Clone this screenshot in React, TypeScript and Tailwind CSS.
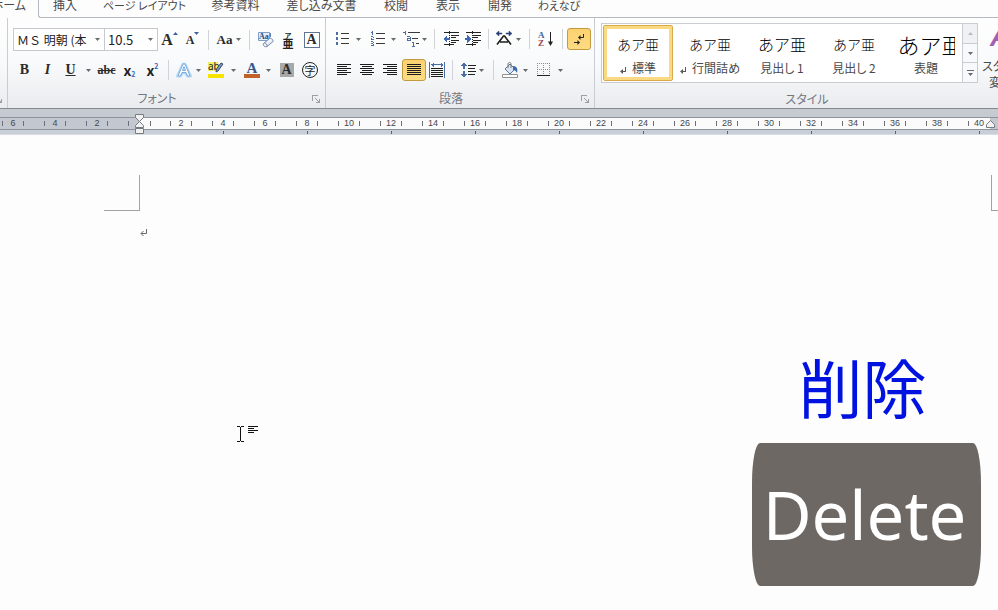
import React from 'react';

interface ButtonProps {
  label: string;
  className?: string;
  children: React.ReactNode;
}

const Tool: React.FC<ButtonProps> = ({ label, className = 'w-[23px] justify-center', children }) => (
  <button type="button" aria-label={label} title={label} className={`flex h-[22px] shrink-0 items-center ${className}`}>
    {children}
  </button>
);

const Caret: React.FC = () => (
  <svg className="shrink-0" width="5" height="3" viewBox="0 0 5 3" fill="#66696e">
    <path d="M0 0h5L2.5 3z" />
  </svg>
);

const Sep: React.FC = () => <div className="mx-1 h-5 w-px shrink-0 bg-[#d0d4d9]" />;

const Launcher: React.FC<{ label: string }> = ({ label }) => (
  <button type="button" aria-label={label} className="absolute right-1 bottom-1 p-px">
    <svg width="8" height="8" viewBox="0 0 8 8" fill="none" stroke="#9ba0a8" shapeRendering="crispEdges">
      <path d="M0.5 6V0.5H6M3 3l4 4M7.5 3.5v4h-4" />
    </svg>
  </button>
);

const Icon: React.FC<{ children: React.ReactNode; smooth?: boolean }> = ({ children, smooth }) => (
  <svg
    className="shrink-0"
    width="16"
    height="16"
    viewBox="0 0 16 16"
    fill="none"
    shapeRendering={smooth ? 'auto' : 'crispEdges'}
  >
    {children}
  </svg>
);

const iconText = "font-['Liberation_Serif',serif] font-bold leading-none text-[#2b2b2b]";

const tabs = [
  { name: '挿入', width: 'w-[52px] text-[12px]' },
  { name: 'ページ レイアウト', width: 'w-[107px] text-[11px]' },
  { name: '参考資料', width: 'w-[75px] text-[12px]' },
  { name: '差し込み文書', width: 'w-[97px] text-[12px]' },
  { name: '校閲', width: 'w-[52px] text-[12px]' },
  { name: '表示', width: 'w-[52px] text-[12px]' },
  { name: '開発', width: 'w-[52px] text-[12px]' },
  { name: 'わえなび', width: 'w-[66px] text-[11px]' },
];

const TabBar: React.FC = () => (
  <nav className="flex h-[18px] overflow-hidden leading-[10px] text-[#4a4a4a]">
    <button type="button" className="flex w-[38px] shrink-0 justify-end pr-3 text-[12px] whitespace-nowrap">
      ホーム
    </button>
    <div className="flex flex-1 rounded-bl-[3px] border-b border-l border-[#b4b9bf] bg-[#fdfdfd]">
      {tabs.map((tab) => (
        <button key={tab.name} type="button" className={`flex shrink-0 justify-center whitespace-nowrap ${tab.width}`}>
          {tab.name}
        </button>
      ))}
    </div>
  </nav>
);

const FontGroup: React.FC = () => (
  <section className="relative flex w-[318px] shrink-0 flex-col border-r border-[#c9cdd2] pt-[10px] pl-[5px]">
    <div className="flex items-center">
      <div className="relative h-[23px] w-[92px] shrink-0">
        <select
          aria-label="フォント"
          className="block h-full w-full appearance-none overflow-hidden border border-[#c6cacf] bg-white pr-3 pl-[3px] text-[12px] text-[#222] [font-feature-settings:'palt'_0]"
        >
          <option>ＭＳ 明朝 (本</option>
        </select>
        <div className="pointer-events-none absolute top-px right-px flex h-[21px] w-[13px] items-center justify-center bg-white">
          <Caret />
        </div>
      </div>
      <div className="relative -ml-px h-[23px] w-[54px] shrink-0">
        <select
          aria-label="フォント サイズ"
          className="block h-full w-full appearance-none border border-[#c6cacf] bg-white pl-[3px] text-[13px] text-[#222]"
        >
          <option>10.5</option>
        </select>
        <div className="pointer-events-none absolute top-px right-px flex h-[21px] w-[13px] items-center justify-center bg-white">
          <Caret />
        </div>
      </div>
      <Tool label="フォントの拡大">
        <span className={`${iconText} text-[16px]`}>A</span>
        <svg className="mb-3 shrink-0" width="5" height="3" viewBox="0 0 5 3" fill="#3f5f9f"><path d="M0 3h5L2.5 0z" /></svg>
      </Tool>
      <Tool label="フォントの縮小">
        <span className={`${iconText} text-[12px]`}>A</span>
        <svg className="mb-3 shrink-0" width="5" height="3" viewBox="0 0 5 3" fill="#3f5f9f"><path d="M0 0h5L2.5 3z" /></svg>
      </Tool>
      <Sep />
      <Tool label="文字種の変換" className="w-8 justify-center gap-1">
        <span className={`${iconText} text-[13px]`}>Aa</span>
        <Caret />
      </Tool>
      <Sep />
      <Tool label="書式のクリア">
        <Icon smooth>
          <path d="M0.5 0.5h11v8h-11z" fill="#e7eef8" stroke="#7e9cc8" />
          <text x="1" y="7" fontSize="8" fontWeight="bold" fontFamily="Liberation Serif" fill="#2c4a84">Aa</text>
          <path d="M12.500 1v4" stroke="#5c7fb6" />
          <path d="M5.500 11.500l6-5c1-1 4 1 3.500 3l-6 5c-2 1-4.500-1-3.500-3z" fill="#eef2f8" stroke="#6f87ab" />
          <path d="M6.500 11c1.500 0 3 1.500 2.500 3.500" stroke="#6f87ab" />
        </Icon>
      </Tool>
      <Tool label="ルビ">
        <svg className="shrink-0" width="13" height="18" viewBox="0 0 13 18" fill="#222" fontFamily="Noto Sans CJK JP" fontWeight="bold">
          <text x="6" y="7" textAnchor="middle" fontSize="7">ア</text>
          <text x="6" y="17" textAnchor="middle" fontSize="11">亜</text>
        </svg>
      </Tool>
      <Tool label="囲み線">
        <span className={`${iconText} flex h-4 w-4 items-center justify-center border border-[#5f7596] bg-white text-[14px]`}>A</span>
      </Tool>
    </div>
    <div className="mt-2 flex items-center">
      <Tool label="太字"><span className={`${iconText} text-[14px]`}>B</span></Tool>
      <Tool label="斜体"><span className={`${iconText} text-[14px] italic`}>I</span></Tool>
      <Tool label="下線"><span className={`${iconText} text-[14px] underline`}>U</span></Tool>
      <Tool label="下線の種類" className="w-[13px] justify-center"><Caret /></Tool>
      <Tool label="取り消し線"><span className={`${iconText} text-[12px] line-through`}>abc</span></Tool>
      <Tool label="下付き">
        <span className="text-[14px] leading-none font-bold text-[#222]">x</span>
        <span className="mt-2 text-[7px] leading-none font-bold text-[#3b66b0]">2</span>
      </Tool>
      <Tool label="上付き">
        <span className="text-[14px] leading-none font-bold text-[#222]">x</span>
        <span className="mb-2 text-[7px] leading-none font-bold text-[#3b66b0]">2</span>
      </Tool>
      <Sep />
      <Tool label="文字の効果" className="w-[30px] justify-center gap-1">
        <Icon smooth>
          <path d="M1.500 14L7 2h2l5.500 12h-3L10 11H6l-1.500 3z" fill="#d5e9fa" stroke="#b5d7f3" strokeWidth="3" strokeLinejoin="round" />
          <path d="M2 14L7 2h2l5 12h-2.500L10 10.500H6L4.500 14zM6.500 8.500h3L8 4.500z" fill="#fff" stroke="#78addf" />
        </Icon>
        <Caret />
      </Tool>
      <Tool label="蛍光ペンの色" className="w-[35px] gap-[6px] pl-[5px]">
        <svg className="shrink-0" width="17" height="16" viewBox="0 0 17 16">
          <path d="M0 0h10v9H0z" fill="#f2f06a" />
          <text x="0" y="8" fontSize="10" fontFamily="Noto Sans" fill="#222">ab</text>
          <path d="M15 2l-5 7-2 1 .5-3 4.500-6z" fill="#7e9ac8" stroke="#3f4c63" />
          <path d="M0 12h16v4H0z" fill="#f6e400" />
        </svg>
        <Caret />
      </Tool>
      <Tool label="フォントの色" className="w-[35px] gap-[6px] pl-[6px]">
        <svg className="shrink-0" width="16" height="16" viewBox="0 0 16 16">
          <text x="8" y="11" textAnchor="middle" fontSize="15" fontWeight="bold" fontFamily="Liberation Serif" fill="#36558f">A</text>
          <path d="M0 12h16v4H0z" fill="#c0622b" />
        </svg>
        <Caret />
      </Tool>
      <Tool label="文字の網かけ" className="w-[27px] justify-center">
        <span className={`${iconText} flex h-[14px] w-[14px] items-center justify-center bg-[#a9a9a9] text-[14px]`}>A</span>
      </Tool>
      <Tool label="囲い文字" className="w-5 justify-center">
        <span className="flex h-4 w-4 items-center justify-center rounded-full border border-[#222] text-[11px] leading-none text-[#222]">
          字
        </span>
      </Tool>
    </div>
    <GroupLabel>フォント</GroupLabel>
    <Launcher label="フォントの詳細" />
  </section>
);

const GroupLabel: React.FC<{ children: React.ReactNode }> = ({ children }) => (
  <h2 className="mt-2 pr-6 text-center text-[12px] leading-[18px] text-[#747880]">{children}</h2>
);

const AlignIcon: React.FC<{ d: string }> = ({ d }) => (
  <Icon>
    <path d={d} stroke="#1c1c1c" />
  </Icon>
);

const ParagraphGroup: React.FC = () => (
  <section className="relative flex w-[269px] shrink-0 flex-col border-r border-[#c9cdd2] pt-[10px] pl-[6px]">
    <div className="flex items-center">
      <Tool label="箇条書き" className="w-[35px] gap-[5px] pl-[3px]">
        <Icon>
          <path d="M1 1h2v3H1zM1 6h2v3H1zM1 11h2v3H1z" fill="#4a6da8" />
          <path d="M6 2.500h8M6 7.500h8M6 12.500h8" stroke="#3a3a3a" />
        </Icon>
        <Caret />
      </Tool>
      <Tool label="段落番号" className="w-[35px] gap-[5px] pl-[3px]">
        <Icon>
          <path d="M0.500 1.500h1M2 0v4M1 5.500h2M3 6v1M2 7.500h-1M1 8.500h3M1 10.500h2M3 11v1M1 12.500h2M3 13v2M1 14.500h2" stroke="#4a6da8" />
          <path d="M6 2.500h9M6 7.500h9M6 12.500h9" stroke="#3a3a3a" />
        </Icon>
        <Caret />
      </Tool>
      <Tool label="アウトライン" className="w-7 gap-px pl-px">
        <svg className="shrink-0" width="18" height="16" viewBox="0 0 18 16" shapeRendering="crispEdges" fill="none">
          <path d="M0 1.500h2M2 0v4M4 5.500h3M7 6v4M4 7.500h3M4 8v2M4 9.500h3M9 11.500h2M10 11v5M9 15.500h3" stroke="#4a6da8" />
          <path d="M5 1.500h12M9 7.500h6M13 12.500h3" stroke="#3a3a3a" />
        </svg>
        <Caret />
      </Tool>
      <Sep />
      <Tool label="インデントを減らす">
        <Icon>
          <path d="M1 1.500h15M1 13.500h10M8 4.500h8M8 6.500h5M8 9.500h8M8 11.500h5" stroke="#222" />
          <path d="M6.500 0v16" stroke="#222" strokeDasharray="1 1" />
          <path d="M0 8l4-4v3h3v2H4v3z" fill="#3f69b0" />
        </Icon>
      </Tool>
      <Tool label="インデントを増やす" className="w-[22px] justify-center">
        <Icon>
          <path d="M1 1.500h15M1 13.500h10M8 4.500h8M8 6.500h5M8 9.500h8M8 11.500h5" stroke="#222" />
          <path d="M7.500 0v16" stroke="#222" strokeDasharray="1 1" />
          <path d="M6 8L2 4v3H0v2h2v3z" fill="#3f69b0" />
        </Icon>
      </Tool>
      <Sep />
      <Tool label="拡張書式" className="w-8 gap-1 pl-[3px]">
        <Icon smooth>
          <path d="M0 2.500L3 0v2h3v1H3v2zM16 2.500L13 0v2h-3v1h3v2z" fill="#28407a" stroke="#28407a" strokeWidth="0.5" />
          <path d="M1 13.500L7.500 5h1l6.500 8.500M4 11h8" stroke="#1c1c1c" strokeWidth="1.600" />
        </Icon>
        <Caret />
      </Tool>
      <Sep />
      <Tool label="並べ替え" className="w-6 justify-center">
        <Icon smooth>
          <text x="0" y="7" fontSize="9" fontWeight="bold" fontFamily="Liberation Serif" fill="#44659f">A</text>
          <text x="0" y="15" fontSize="9" fontWeight="bold" fontFamily="Liberation Serif" fill="#97424b">Z</text>
          <path d="M12.500 1v12" stroke="#222" />
          <path d="M10 10.500h5L12.500 15z" fill="#222" />
        </Icon>
      </Tool>
      <Sep />
      <Tool label="編集記号の表示" className="w-6 justify-center rounded-[3px] border border-[#c49a3f] bg-linear-to-b from-[#fbd26f] to-[#fddc83]">
        <Icon smooth>
          <path d="M12.500 3v3.500H9M3 11.500h4" stroke="#222" />
          <path d="M9.500 4v5L7 6.500zM6.500 9v5L9 11.500z" fill="#222" />
        </Icon>
      </Tool>
    </div>
    <div className="mt-[9px] flex items-center">
      <Tool label="左揃え"><AlignIcon d="M1 2.500h14M1 4.500h10M1 6.500h14M1 8.500h10M1 10.500h14M1 12.500h10" /></Tool>
      <Tool label="中央揃え"><AlignIcon d="M1 2.500h14M3 4.500h10M1 6.500h14M3 8.500h10M1 10.500h14M3 12.500h10" /></Tool>
      <Tool label="右揃え" className="w-6 justify-center"><AlignIcon d="M1 2.500h14M5 4.500h10M1 6.500h14M5 8.500h10M1 10.500h14M5 12.500h10" /></Tool>
      <Tool label="両端揃え" className="w-6 justify-center rounded-[3px] border border-[#c49a3f] bg-linear-to-b from-[#fbd26f] to-[#fddc83]">
        <AlignIcon d="M1 2.500h14M1 4.500h14M1 6.500h14M1 8.500h14M1 10.500h14M1 12.500h14" />
      </Tool>
      <Tool label="均等割り付け" className="w-[22px] justify-center">
        <Icon>
          <path d="M0.500 0v16M15.500 0v16M2 2.500h12M4 0.500v4M12 0.500v4M3 1.500v2M13 1.500v2" stroke="#4a6da8" />
          <path d="M2 6.500h12M2 8.500h12M2 10.500h12M2 12.500h12M2 14.500h12" stroke="#1c1c1c" />
        </Icon>
      </Tool>
      <Sep />
      <Tool label="行間" className="w-8 gap-[2px] pl-1">
        <Icon>
          <path d="M3 0l3 4H4v3H2V4H0zM3 16l3-4H4V9H2v3H0z" fill="#4a6da8" />
          <path d="M7 3.500h8M7 6.500h7M7 9.500h8M7 12.500h7" stroke="#222" />
        </Icon>
        <Caret />
      </Tool>
      <Sep />
      <Tool label="塗りつぶし" className="w-[35px] gap-[5px] pl-1">
        <Icon smooth>
          <path d="M3 7l5-5 5 5-5 5z" fill="#dbe5f2" stroke="#58759f" />
          <path d="M6 6V2c0-2 3-2 3 0v4" stroke="#777" />
          <path d="M11 4c4 0 5 3 4 7-1-2-2-3-4-3z" fill="#3f69b0" />
          <path d="M0.500 12.500h15v3h-15z" fill="#fff" stroke="#909090" />
        </Icon>
        <Caret />
      </Tool>
      <Tool label="罫線" className="w-[34px] gap-[6px] pl-[3px]">
        <Icon>
          <path d="M1 1.500h13M1 7.500h13M1.500 1v12M7.500 1v12M13.500 1v12" stroke="#8b8b8b" strokeDasharray="1 1" />
          <path d="M1 13.500h13" stroke="#222" />
        </Icon>
        <Caret />
      </Tool>
    </div>
    <GroupLabel>段落</GroupLabel>
    <Launcher label="段落の詳細" />
  </section>
);

const ReturnMark: React.FC = () => (
  <svg className="shrink-0" width="8" height="8" viewBox="0 0 8 8" fill="none" stroke="#6b6b6b">
    <path d="M6.500 0v4.500H1M3.500 2L1 4.500 3.500 7" />
  </svg>
);

const StyleMark: React.FC = () => (
  <svg className="mt-1 shrink-0" width="7" height="7" viewBox="0 0 7 7" fill="#5a5a5a">
    <path d="M5 0h1v5H3v2L0 4.500 3 2v2h2z" />
  </svg>
);

const styles = [
  { name: '標準', mark: true, sample: 'justify-center text-[14px]', selected: true },
  { name: '行間詰め', mark: true, sample: 'justify-center text-[14px]' },
  { name: '見出し 1', sample: 'justify-center text-[16px]' },
  { name: '見出し 2', sample: 'justify-center text-[14px]' },
  { name: '表題', sample: 'justify-start text-[22px]' },
];

const StyleGroup: React.FC = () => (
  <section className="flex min-w-0 flex-1 overflow-hidden pt-[5px] pl-[6px]">
    <div className="flex shrink-0 flex-col">
      <div className="flex h-[60px] border border-[#c9cdd2] bg-white">
        {styles.map((style) => (
          <button
            key={style.name}
            type="button"
            className={`m-px flex h-14 w-[70px] flex-col items-center rounded-[2px] border pt-[6px] ${
              style.selected ? 'border-[#d9a94a] inset-ring-3 inset-ring-[#f9d981]' : 'border-transparent'
            }`}
          >
            <span className={`flex h-6 w-[57px] items-center overflow-hidden leading-6 font-light whitespace-nowrap text-black [font-feature-settings:'palt'_0] ${style.sample}`}>
              あア亜
            </span>
            <span className="flex items-center gap-[5px] text-[12px] leading-6 whitespace-nowrap text-[#4a4a4a]">
              {style.mark && <StyleMark />}
              {style.name}
            </span>
          </button>
        ))}
        <div className="flex w-[15px] flex-col divide-y divide-[#c9cdd2] border-l border-[#c9cdd2] bg-[#f8f9fa]">
          <button type="button" aria-label="上へ" className="flex flex-1 items-center justify-center bg-[#f0f1f3]">
            <svg width="5" height="3" viewBox="0 0 5 3" fill="#b9bdc2"><path d="M0 3h5L2.500 0z" /></svg>
          </button>
          <button type="button" aria-label="下へ" className="flex flex-1 items-center justify-center"><Caret /></button>
          <button type="button" aria-label="その他" className="flex flex-1 flex-col items-center justify-center gap-[2px]">
            <span className="h-px w-[7px] bg-[#66696e]" />
            <Caret />
          </button>
        </div>
      </div>
      <h2 className="mt-[7px] pl-[35px] text-center text-[12px] leading-[18px] text-[#747880]">スタイル</h2>
    </div>
    <button type="button" className="ml-1 flex w-12 shrink-0 flex-col items-start text-[12px] leading-4 whitespace-nowrap text-[#4a4a4a]">
      <span className="h-[35px] pl-2 font-['Liberation_Sans',sans-serif] text-[28px] leading-[28px] font-bold text-[#a45fb4] italic">A</span>
      <span>スタイルの</span>
      <span className="pl-[7px]">変更</span>
    </button>
  </section>
);

const RulerCell: React.FC<{ value: number }> = ({ value }) => (
  <div className="flex w-[42px] shrink-0 items-center justify-between px-[10px]">
    <span className="h-[5px] w-px bg-[#6c6f75]" />
    <span>{value}</span>
    <span className="h-[5px] w-px bg-[#6c6f75]" />
  </div>
);

const leftUnits = [6, 4, 2];
const rightUnits = Array.from({ length: 20 }, (_, i) => (i + 1) * 2);
const stops = Array.from({ length: 10 }, (_, i) => i);

const Ruler: React.FC = () => (
  <div className="bg-[#c6cbd2] pt-2">
    <div className="relative flex h-[13px] border-y border-[#8d929b] bg-[#c3c8d0] font-['Liberation_Sans',sans-serif] text-[9px] leading-[11px] text-[#44474d]">
      <div className="flex w-[139px] shrink-0 justify-end overflow-hidden">
        {leftUnits.map((n) => <RulerCell key={n} value={n} />)}
        <div className="flex w-[21px] shrink-0 items-center pl-[10px]"><span className="h-[5px] w-px bg-[#6c6f75]" /></div>
      </div>
      <div className="flex w-[851px] shrink-0 overflow-hidden bg-[#fbfbfc]">
        <div className="flex w-[21px] shrink-0 items-center pl-[11px]"><span className="h-[5px] w-px bg-[#6c6f75]" /></div>
        {rightUnits.map((n) => <RulerCell key={n} value={n} />)}
      </div>
      <svg className="absolute -top-1 left-[135px]" width="9" height="21" viewBox="0 0 9 21" fill="#f1f1f1" stroke="#777b82">
        <path d="M0.500 0.500h8v3l-4 4-4-4zM4.500 7.500l4 4v2h-8v-2zM0.500 14.500h8v5h-8z" />
      </svg>
      <svg className="absolute top-0 left-[986px]" width="9" height="13" viewBox="0 0 9 13" fill="#f1f1f1" stroke="#777b82">
        <path d="M4.500 2.500l4 4v3h-8v-3z" />
      </svg>
    </div>
    <div className="flex h-[5px] overflow-hidden border-b border-[#d9dce1] bg-[#c9cfd9] pl-[140px]">
      {stops.map((n) => (
        <div key={n} className="flex w-[84px] shrink-0 justify-end">
          <span className="mt-px h-[3px] w-px bg-[#5c6068]" />
        </div>
      ))}
    </div>
  </div>
);

const Document: React.FC = () => (
  <main className="relative flex-1 overflow-hidden bg-[#fdfdfd] pt-10">
    <div className="flex pl-[104px]">
      <div className="h-9 w-9 shrink-0 border-r border-b border-[#a3a3a3]" />
      <div className="w-[851px] shrink-0" />
      <div className="h-9 w-9 shrink-0 border-b border-l border-[#a3a3a3]" />
    </div>
    <p className="mt-[18px] pl-[140px]"><ReturnMark /></p>

    <svg className="absolute top-[291px] left-[237px]" width="22" height="18" viewBox="0 0 22 18" stroke="#111" fill="none" shapeRendering="crispEdges">
      <path d="M0 0.500h3M4 0.500h3M3.500 1v14M0 15.500h3M4 15.500h3M11 0.500h10M11 2.500h6M11 4.500h10M11 6.500h6" />
    </svg>

    <div className="absolute right-[17px] bottom-6 flex w-[229px] flex-col items-center">
      <p className="mb-2 pr-2 text-[64px] leading-[100px] text-[#0012e0]">削除</p>
      <kbd className="flex h-[143px] w-full items-center justify-center rounded-[8px/40px] bg-[#6e6865] pr-1 font-['Noto_Sans',sans-serif] text-[67px] leading-none text-white">
        Delete
      </kbd>
    </div>
  </main>
);

export default function App() {
  return (
    <div className="flex min-h-screen flex-col overflow-hidden bg-[#fdfdfd] font-['Noto_Sans_CJK_JP',sans-serif] [font-feature-settings:'palt']">
      <TabBar />
      <div className="flex h-[91px] border-b border-[#858a92] bg-linear-to-b from-[#fefefe] via-[#f9fafb] to-[#e9ebee]">
        <div className="relative w-2 shrink-0 overflow-hidden border-r border-[#c9cdd2]">
          <Launcher label="クリップボードの詳細" />
        </div>
        <FontGroup />
        <ParagraphGroup />
        <StyleGroup />
      </div>
      <Ruler />
      <Document />
    </div>
  );
}
